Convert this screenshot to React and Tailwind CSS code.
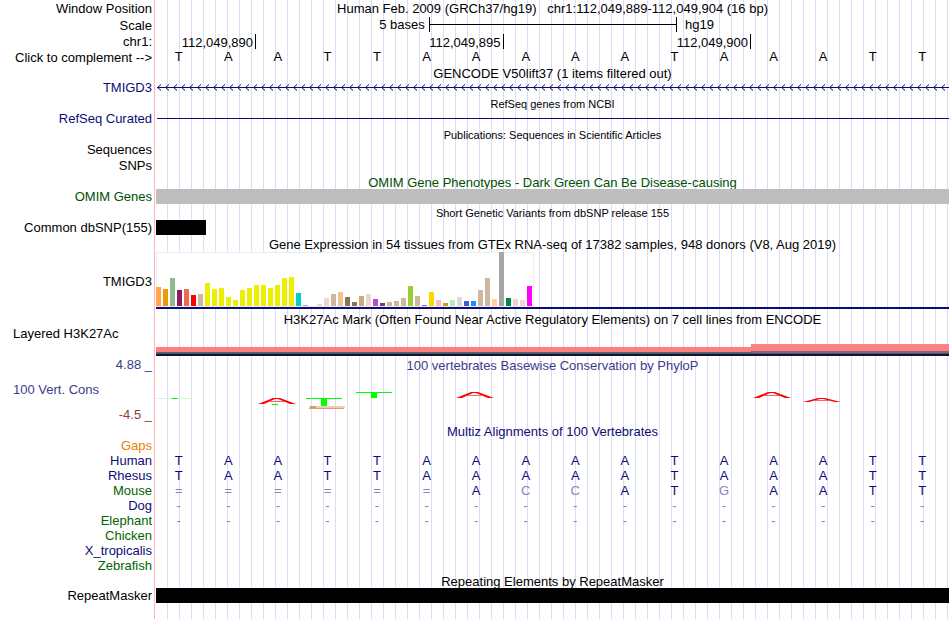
const bases = 'TAATTAAAAATAAATT'.split('');

// [colour, height] per GTEx tissue
const tissues = [
  ['#ffa54f', 19], ['#ee9a00', 17], ['#8fbc8f', 28], ['#8b1c62', 16], ['#ee6a50', 17], ['#ff0000', 11],
  ['#cdb79e', 12], ['#eeee00', 23], ['#eeee00', 17], ['#eeee00', 18], ['#eeee00', 9], ['#eeee00', 6],
  ['#eeee00', 16], ['#eeee00', 18], ['#eeee00', 21], ['#eeee00', 21], ['#eeee00', 18], ['#eeee00', 21],
  ['#eeee00', 28], ['#eeee00', 29], ['#00cdcd', 13], ['#ee82ee', 1], ['#9ac0cd', 0], ['#eed5d2', 2],
  ['#eed5d2', 8], ['#cdb79e', 12], ['#eec591', 14], ['#8b7355', 9], ['#8b7355', 4], ['#cdaa7d', 10],
  ['#eed5d2', 12], ['#b452cd', 7], ['#7a378b', 3], ['#cdb79e', 4], ['#cdb79e', 5], ['#cdb79e', 8],
  ['#9acd32', 20], ['#cdb79e', 10], ['#7a67ee', 1], ['#ffd700', 14], ['#ffb6c1', 6], ['#cd9b1d', 3],
  ['#b4eeb4', 6], ['#d9d9d9', 9], ['#3a5fcd', 5], ['#1e90ff', 5], ['#cdb79e', 16], ['#cdb79e', 28],
  ['#ffd39b', 7], ['#a6a6a6', 54], ['#008b45', 8], ['#eed5d2', 7], ['#eed5d2', 6], ['#ff00ff', 20],
];

const species = [
  { name: 'Human', color: 'text-[#0c0c78]', seq: 'TAATTAAAAATAAATT' },
  { name: 'Rhesus', color: 'text-[#0c0c78]', seq: 'TAATTAAAAATAAATT' },
  { name: 'Mouse', color: 'text-[#006400]', seq: '======ACCATGAATT' },
  { name: 'Dog', color: 'text-[#0c0c78]', seq: '----------------' },
  { name: 'Elephant', color: 'text-[#006400]', seq: '----------------' },
  { name: 'Chicken', color: 'text-[#006400]', seq: '' },
  { name: 'X_tropicalis', color: 'text-[#0c0c78]', seq: '' },
  { name: 'Zebrafish', color: 'text-[#006400]', seq: '' },
];

function Row({ label, labelClass = '', className = 'h-[15px]', children }) {
  return (
    <div className={`flex pr-px ${className}`}>
      <div className={`flex w-[155px] shrink-0 items-center justify-end border-r border-[#ffb4b4] pr-0.5 whitespace-pre ${labelClass}`}>
        {label}
      </div>
      <div className="ml-px min-w-0 flex-1 bg-[repeating-linear-gradient(to_right,transparent_0px,transparent_11px,#dcdcf8_11px,#dcdcf8_12px)]">
        {children}
      </div>
    </div>
  );
}

function Title({ label, labelClass, className = 'h-4', textClass = 'leading-[14px]', children }) {
  return (
    <Row label={label} labelClass={labelClass} className={className}>
      <h2 className={`flex h-full items-end justify-center whitespace-pre ${textClass}`}>
        {children}
      </h2>
    </Row>
  );
}

function Sequence({ letters, reference, className = 'leading-[15px]' }) {
  return (
    <div className={`-ml-0.5 mr-0.5 grid grid-cols-16 text-center ${className}`}>
      {letters.map((b, i) => (
        <span key={i} className={reference && b !== reference[i] ? 'text-[#8585bb]' : ''}>{b}</span>
      ))}
    </div>
  );
}

// Squashed "A" of the conservation logo
function LogoA({ x, y, h }) {
  return (
    <g fill="#ff0000">
      <path d={`M${x} ${y + h} L${x + 15} ${y} H${x + 22} L${x + 38} ${y + h} H${x + 32} L${x + 20} ${y + 1} H${x + 17} L${x + 6} ${y + h}z`} />
      <rect x={x + 12} y={y + Math.floor(h / 2)} width="14" height="1" fillOpacity="0.6" />
    </g>
  );
}

function Conservation() {
  return (
    <svg className="block h-[50px] w-full" viewBox="0 0 793 50" preserveAspectRatio="none">
      <rect x="1" y="24" width="35" height="1" fill="#d4f5d8" />
      <rect x="16" y="24" width="6" height="1" fill="#00ff00" />
      <LogoA x={102} y={24} h={6} />
      <rect x="116" y="30" width="6" height="1" fill="#00ff00" />
      <path d="M150 24h36v1h-15v7h-6v-7h-15z" fill="#00ff00" />
      <rect x="153" y="32" width="36" height="2" rx="1" fill="#ddd8ac" />
      <rect x="154" y="32" width="6" height="2" fill="#b8b050" />
      <rect x="153" y="34" width="35" height="1" fill="#ff8c8c" />
      <path d="M200 18h36v1h-15v5h-6v-5h-15z" fill="#00ff00" />
      <LogoA x={300} y={18} h={6} />
      <LogoA x={597} y={18} h={6} />
      <LogoA x={647} y={24} h={4} />
    </svg>
  );
}

export default function App() {
  return (
    <main className="flex min-h-screen flex-col overflow-hidden bg-white font-['Liberation_Sans',Arial,sans-serif] text-[13px] leading-4 text-black">
      <Title label="Window Position" labelClass="pt-0.5">
        {'Human Feb. 2009 (GRCh37/hg19)   chr1:112,049,889-112,049,904 (16 bp)'}
      </Title>

      <Row label="Scale" labelClass="pt-0.5" className="h-[17px]">
        <div className="flex h-full items-center">
          <span className="w-[34.4%] pt-px pr-1 text-right">5 bases</span>
          <div className="flex h-[15px] w-[31.3%] items-center border-x border-black">
            <div className="h-px w-full bg-black" />
          </div>
          <span className="pt-px pl-2">hg19</span>
        </div>
      </Row>
      <Row label="chr1:" labelClass="pt-0.5" className="h-4">
        <div className="flex h-full pt-px pl-px text-right leading-[17px]">
          <span className="w-1/8 border-r border-black pr-0.5">112,049,890</span>
          <span className="w-5/16 border-r border-black pr-0.5">112,049,895</span>
          <span className="w-5/16 border-r border-black pr-0.5">112,049,900</span>
        </div>
      </Row>
      <Row label={<button type="button">{'Click to complement -->'}</button>} labelClass="pt-0.5" className="h-4">
        <Sequence letters={bases} className="leading-4" />
      </Row>

      <Title>GENCODE V50lift37 (1 items filtered out)</Title>
      <Row label="TMIGD3" labelClass="text-[#0c0c78]" className="h-[13px]">
        <svg className="block h-[13px] w-full">
          <defs>
            <pattern id="strand" width="8" height="13" patternUnits="userSpaceOnUse">
              <path d="M5 3.5 L1.5 6.5 L5 9.5" fill="none" stroke="#0c0c78" />
            </pattern>
          </defs>
          <rect width="100%" height="13" fill="url(#strand)" />
          <rect x="1" y="6" width="100%" height="1" fill="#0c0c78" />
        </svg>
      </Row>

      <Title textClass="text-[11px] leading-[14px]" className="h-[17px]">RefSeq genes from NCBI</Title>
      <Row label="RefSeq Curated" labelClass="text-[#0c0c78]">
        <div className="flex h-full items-center pl-px">
          <div className="h-px w-full bg-[#0c0c78]" />
        </div>
      </Row>

      <Title textClass="text-[11px] leading-[14px]">Publications: Sequences in Scientific Articles</Title>
      <Row label="Sequences" />
      <Row label="SNPs" labelClass="pt-0.5" className="h-4" />

      <Title textClass="leading-[13px] text-[#005000]">
        OMIM Gene Phenotypes - Dark Green Can Be Disease-causing
      </Title>
      <Row label="OMIM Genes" labelClass="text-[#005000]">
        <div className="h-full bg-[#bebebe]" />
      </Row>

      <Title textClass="text-[11px] leading-[14px]">Short Genetic Variants from dbSNP release 155</Title>
      <Row label="Common dbSNP(155)">
        <div className="h-full w-1/16 bg-black" />
      </Row>

      <Title className="h-[17px]">
        Gene Expression in 54 tissues from GTEx RNA-seq of 17382 samples, 948 donors (V8, Aug 2019)
      </Title>
      <Row label="TMIGD3" labelClass="pt-0.5" className="h-[57px]">
        <div className="flex h-[55px] w-[378px] items-end gap-0.5 bg-white pb-px inset-ring inset-ring-[#eeeeee]">
          {tissues.map(([color, height], i) => (
            <div key={i} className="w-[5px] shrink-0" style={{ height, backgroundColor: color }} />
          ))}
        </div>
        <div className="h-0.5 bg-[#0c0c78]" />
      </Row>

      <Title textClass="leading-4" className="h-[19px]">
        H3K27Ac Mark (Often Found Near Active Regulatory Elements) on 7 cell lines from ENCODE
      </Title>
      <Row label="Layered H3K27Ac" labelClass="items-start! justify-start! pl-[13px] -mt-0.5" className="h-7">
        <div className="flex h-full items-end">
          <div className="w-3/4">
            <div className="h-[5px] bg-[#ff8080]" />
            <div className="h-px bg-[#5f5f78]" />
            <div className="h-px bg-[#3c5f69]" />
            <div className="h-0.5 bg-[#141432]" />
          </div>
          <div className="w-1/4">
            <div className="h-[7px] bg-[#ff8080]" />
            <div className="h-0.5 bg-[#826482]" />
            <div className="h-px bg-[#3c5f69]" />
            <div className="h-0.5 bg-[#141432]" />
          </div>
        </div>
      </Row>

      <Title label="4.88 _" labelClass="text-[#3c3c8c]" className="h-[18px]" textClass="leading-4 text-[#3c3c8c]">
        100 vertebrates Basewise Conservation by PhyloP
      </Title>
      <Row
        className="h-[50px]"
        labelClass="pl-[13px]"
        label={
          <div className="flex h-full w-full flex-col justify-between pt-2 pb-px">
            <span className="text-[#3c3c8c]">100 Vert. Cons</span>
            <span className="text-right text-[#8c3c3c]">-4.5 _</span>
          </div>
        }
      >
        <Conservation />
      </Row>

      <Title textClass="leading-4 text-[#0c0c78]">Multiz Alignments of 100 Vertebrates</Title>
      <Row label="Gaps" labelClass="pb-0.5 text-[#e68200]" className="h-[13px]" />
      {species.map((s) => (
        <Row key={s.name} label={s.name} labelClass={s.color}>
          <div className={s.seq[0] === '-' ? 'text-[#8585bb]' : 'text-[#0c0c78]'}>
            <Sequence letters={s.seq.split('')} reference={bases} />
          </div>
        </Row>
      ))}

      <Title textClass="leading-[13px]" className="h-[15px]">Repeating Elements by RepeatMasker</Title>
      <Row label="RepeatMasker">
        <div className="h-full bg-black" />
      </Row>
      <Row className="min-h-4 flex-1" />
    </main>
  );
}
